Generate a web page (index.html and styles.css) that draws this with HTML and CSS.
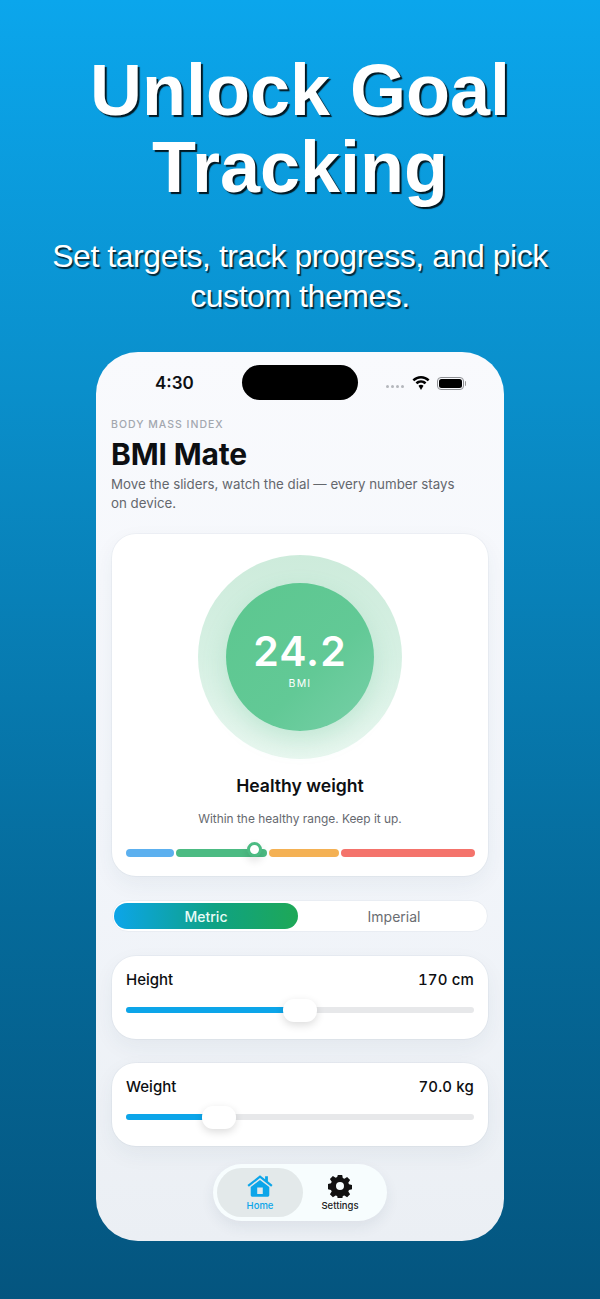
FILE: index.html
```html
<!DOCTYPE html>
<html lang="en">
<head>
<meta charset="utf-8">
<title>Unlock Goal Tracking</title>
<link rel="stylesheet" href="styles.css">
</head>
<body>
<main class="screen">
  <header class="hero">
    <h1 class="hero-title">Unlock Goal<br>Tracking</h1>
    <p class="hero-sub">Set targets, track progress, and pick<br>custom themes.</p>
  </header>
  <section class="phone">
    <div class="status">
      <span class="time">4:30</span>
      <span class="island"></span>
      <span class="status-icons">
        <span class="dots"><i></i><i></i><i></i><i></i></span>
        <svg class="wifi" width="18" height="14" viewBox="0 0 18 14"><path d="M9 0C5.700 0 2.700 1.300.5 3.500l1.700 1.700C4 3.500 6.400 2.400 9 2.400s5 1.100 6.800 2.800l1.700-1.700C15.300 1.300 12.300 0 9 0z"/><path d="M9 4.300c-2.100 0-4 .8-5.400 2.200l1.700 1.700C6.300 7.300 7.600 6.700 9 6.700s2.700.6 3.700 1.500l1.700-1.700C13 5.100 11.100 4.300 9 4.300z"/><path d="M9 8.700c-1 0-1.900.4-2.500 1L9 14l2.500-4.300c-.6-.6-1.500-1-2.500-1z"/></svg>
        <span class="battery"><span class="battery-fill"></span></span>
      </span>
    </div>
    <div class="intro">
      <div class="eyebrow">BODY MASS INDEX</div>
      <h2 class="app-title">BMI Mate</h2>
      <p class="app-desc">Move the sliders, watch the dial — every number stays on device.</p>
    </div>
    <div class="card result">
      <div class="halo">
        <div class="dial">
          <span class="dial-value">24.2</span>
          <span class="dial-label">BMI</span>
        </div>
      </div>
      <div class="result-title">Healthy weight</div>
      <div class="result-note">Within the healthy range. Keep it up.</div>
      <div class="scale">
        <span class="seg seg-blue"></span>
        <span class="seg seg-green"></span>
        <span class="seg seg-orange"></span>
        <span class="seg seg-red"></span>
        <span class="marker"></span>
      </div>
    </div>
    <div class="toggle">
      <span class="toggle-opt toggle-on">Metric</span>
      <span class="toggle-opt toggle-off">Imperial</span>
    </div>
    <div class="card slider-card">
      <div class="slider-row"><span>Height</span><span class="slider-value">170 cm</span></div>
      <div class="track"><span class="fill fill-height"></span><span class="thumb thumb-height"></span></div>
    </div>
    <div class="card slider-card">
      <div class="slider-row"><span>Weight</span><span class="slider-value">70.0 kg</span></div>
      <div class="track"><span class="fill fill-weight"></span><span class="thumb thumb-weight"></span></div>
    </div>
    <nav class="tabs">
      <div class="tab tab-on">
        <svg width="26" height="24" viewBox="0 0 28 24"><path d="M14 0.500 19.500 4.700V1.500H22.500V7L27.500 10.900 26 12.700 14 3.400 2 12.700 .5 10.900z"/><path d="M14 5.500 24 13.200V22a1.500 1.500 0 0 1-1.500 1.500H5.500A1.500 1.500 0 0 1 4 22V13.200zM11 13.500V20.500H17V13.500z" fill-rule="evenodd"/></svg>
        <span>Home</span>
      </div>
      <div class="tab tab-off">
        <svg width="24" height="24" viewBox="0 0 24 24"><path fill-rule="evenodd" d="M9.800 1h4.400l.6 3.100 1.600.7 2.700-1.800 3 3-1.800 2.700.7 1.600 3.100.6v4.400l-3.100.6-.7 1.600 1.800 2.700-3 3-2.700-1.800-1.600.7-.6 3.100H9.800l-.6-3.100-1.600-.7-2.700 1.800-3-3 1.800-2.700-.7-1.600-3.100-.6V9.900l3.100-.6.7-1.600L1.900 5l3-3 2.700 1.800 1.600-.7zM12 8a4 4 0 1 0 0 8 4 4 0 0 0 0-8z"/></svg>
        <span>Settings</span>
      </div>
    </nav>
  </section>
</main>
</body>
</html>
```
FILE: styles.css
```css
* { box-sizing: border-box; }
html, body { margin: 0; padding: 0; }
body { width: 600px; height: 1299px; overflow: hidden; }
.screen {
  width: 600px; height: 1299px;
  background: linear-gradient(180deg, #0ba6ec 0%, #0a8fcb 30%, #056a9a 70%, #04557f 100%);
  display: flex; flex-direction: column; align-items: center;
  padding-top: 52px;
}
.hero { text-align: center; color: #fff; height: 300px; }
.hero-title {
  margin: 0;
  font: 700 72px/77px "Liberation Sans", Arial, sans-serif;
  text-shadow: 2px 2px 1px rgba(0,0,0,.85);
}
.hero-sub {
  margin: 31px 0 0;
  font: 400 32px/39.500px "Liberation Sans", Arial, sans-serif;
  letter-spacing: -.45px;
  text-shadow: 1.500px 1.500px 1px rgba(0,0,0,.75);
}
.phone {
  width: 408px; height: 889px;
  border-radius: 42px;
  background: linear-gradient(180deg, #f9fafd 0%, #f3f6fb 50%, #ebeff4 100%);
  display: flex; flex-direction: column; align-items: center;
  font-family: Inter, "Noto Sans", sans-serif;
  color: #0d0f12;
}
.status { width: 100%; height: 48px; margin-top: 13px; position: relative; display: flex; align-items: flex-start; }
.time { position: absolute; left: 59px; top: 8px; font-size: 17px; line-height: 21px; font-weight: 600; }
.island { position: absolute; left: 146px; top: 0; width: 116px; height: 35px; border-radius: 18px; background: #000; }
.status-icons { position: absolute; left: 290px; top: 10px; display: flex; align-items: center; height: 16px; }
.dots { display: flex; gap: 2px; margin-top: 6px; }
.dots i { width: 3px; height: 3px; border-radius: 50%; background: #b4b7bc; }
.wifi { margin-left: 8px; fill: #000; }
.battery { margin-left: 7px; width: 27px; height: 13px; border: 1px solid #8d8f93; border-radius: 4px; padding: 1px; position: relative; }
.battery::after { content: ""; position: absolute; right: -3px; top: 3px; width: 1.500px; height: 5px; background: #9a9a9a; border-radius: 0 2px 2px 0; }
.battery-fill { display: block; height: 100%; background: #000; border-radius: 2.500px; }
.intro { width: 100%; padding: 0 15px; height: 121px; }
.eyebrow { font-size: 10.500px; line-height: 14px; letter-spacing: 1px; font-weight: 500; color: #a3a7af; margin-top: 5px; }
.app-title { margin: 3px 0 0; font-size: 30px; line-height: 38px; font-weight: 700; letter-spacing: -.15px; }
.app-desc { margin: 2px 0 0; font-size: 13.300px; line-height: 19px; color: #64676d; width: 360px; }
.card {
  width: 376px; background: #fff; border-radius: 24px;
  box-shadow: 0 0 0 1px rgba(40,60,90,.035), 0 8px 22px rgba(40,60,90,.06);
}
.result { height: 342px; display: flex; flex-direction: column; align-items: center; padding-top: 21px; }
.halo {
  width: 204px; height: 204px; border-radius: 50%;
  background: linear-gradient(180deg, #cdebdb 0%, #d6f0e3 50%, #e9f7f0 100%);
  display: flex; align-items: center; justify-content: center;
}
.dial {
  width: 148px; height: 148px; border-radius: 50%;
  background: linear-gradient(135deg, #5cc78f 0%, #62c996 60%, #78d0a8 100%);
  box-shadow: 0 10px 24px rgba(76,187,131,.22);
  color: #fff; display: flex; flex-direction: column; align-items: center;
  padding-top: 45px;
}
.dial-value { font-size: 41px; line-height: 46px; font-weight: 600; letter-spacing: 1px; }
.dial-label { font-size: 10.500px; line-height: 14px; letter-spacing: 1.200px; margin-top: 3px; }
.result-title { margin-top: 16px; font-size: 17.600px; line-height: 22px; font-weight: 600; }
.result-note { margin-top: 14px; font-size: 11.900px; line-height: 16px; color: #66696f; }
.scale { width: 349px; margin-top: 22px; display: flex; gap: 2px; position: relative; height: 8px; }
.seg { display: block; height: 8px; border-radius: 4px; }
.seg-blue { width: 49px; background: #5cb0ef; }
.seg-green { width: 91px; background: #4cbb83; }
.seg-orange { width: 70px; background: #f4b154; }
.seg-red { width: 134px; background: #f4736b; }
.marker {
  position: absolute; left: 121px; top: -7px; width: 15px; height: 15px; border-radius: 50%;
  background: #fff; border: 3px solid #4cbb83;
  box-shadow: 0 4px 8px rgba(0,0,0,.12);
}
.toggle {
  width: 376px; height: 32px; margin-top: 24px; padding: 2px 1px;
  border-radius: 16px; background: #fff; border: 1px solid #e9edf3;
  display: flex; align-items: stretch;
  font-size: 14px;
}
.toggle-opt { display: flex; align-items: center; justify-content: center; }
.toggle-off { flex: 1; color: #6a6d72; font-weight: 400; padding-left: 4px; }
.toggle-on {
  flex: 0 0 184px; border-radius: 14px; color: #e8fbf6; font-weight: 500;
  background: linear-gradient(90deg, #0ca5e9 0%, #0fa283 55%, #1ea857 100%);
}
.slider-card { height: 83px; margin-top: 24px; padding: 14px 14px 0; }
.slider-row { display: flex; justify-content: space-between; font-size: 15px; line-height: 20px; font-weight: 500; }
.slider-value { font-variant-numeric: tabular-nums; letter-spacing: .15px; }
.track { position: relative; height: 6px; margin-top: 17px; border-radius: 3px; background: #e7e8ea; }
.fill { display: block; height: 100%; border-radius: 3px; background: #0ca5e9; }
.fill-height { width: 48.500%; }
.fill-weight { width: 25%; }
.thumb {
  position: absolute; top: -8px; width: 34px; height: 23px; border-radius: 11px; background: #fff;
  box-shadow: 0 3px 8px rgba(0,0,0,.14);
}
.thumb-height { left: 157px; }
.thumb-weight { left: 76px; }
.tabs {
  width: 174px; height: 57px; margin-top: 18px; padding: 4px;
  border-radius: 29px; background: #f7fdfe;
  box-shadow: 0 6px 14px rgba(40,60,90,.08);
  display: flex;
}
.tab { display: flex; flex-direction: column; align-items: center; justify-content: flex-start; padding-top: 6px; font-size: 9.500px; line-height: 12px; font-weight: 500; border-radius: 25px; gap: 2px; }
.tab svg { display: block; }
.tab-on { flex: 0 0 86px; background: #e3e9ea; color: #0ca5e9; fill: #0ca5e9; }
.tab-off { flex: 1; color: #222; fill: #111; padding-right: 6px; }
```
